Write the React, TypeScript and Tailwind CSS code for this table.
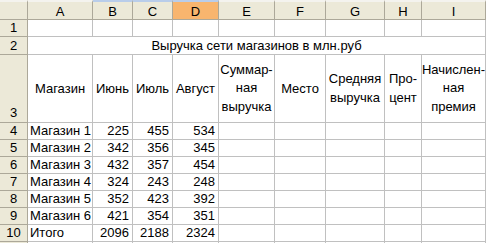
import type { ReactNode } from "react";

const columns = ["A", "B", "C", "D", "E", "F", "G", "H", "I"];

const stores: [string, number, number, number][] = [
  ["Магазин 1", 225, 455, 534],
  ["Магазин 2", 342, 356, 345],
  ["Магазин 3", 432, 357, 454],
  ["Магазин 4", 324, 243, 248],
  ["Магазин 5", 352, 423, 392],
  ["Магазин 6", 421, 354, 351],
  ["Итого", 2096, 2188, 2324],
];

function Head({ children, active, className = "" }: { children?: ReactNode; active?: boolean; className?: string }) {
  return (
    <div
      className={`flex justify-center border-r border-b border-[#aca899] ${
        active ? "bg-[#f8b56e]" : "bg-[#ece9d8]"
      } ${className}`}
    >
      {children}
    </div>
  );
}

function Cell({ children, className = "" }: { children?: ReactNode; className?: string }) {
  return <div className={`flex border-r border-b border-[#c0c0c0] ${className}`}>{children}</div>;
}

export default function App() {
  return (
    <div className="h-[243px] w-[486px] overflow-hidden bg-white text-[13px] text-black [font-family:'Liberation_Sans',Arial,sans-serif]">
      <div className="grid grid-cols-[28px_65px_40px_40px_46px_56px_51px_59px_37px_64px] grid-rows-[20px_17px_18px_68px_17px_17px_17px_17px_17px_17px_17px_20px] leading-[16px]">
        {/* column headers */}
        <Head className="border-t-2 border-t-[#f4f3ee]" />
        {columns.map((c) => (
          <Head
            key={c}
            active={c === "D"}
            className={`items-center pt-0.5 border-t-2 ${
              c === "B" || c === "C" || c === "D" ? "border-t-[#b9cdea]" : "border-t-[#f4f3ee]"
            }`}
          >
            {c}
          </Head>
        ))}

        {/* row 1 */}
        <Head className="items-center">1</Head>
        {columns.map((c) => (
          <Cell key={c} />
        ))}

        {/* row 2 */}
        <Head className="items-center">2</Head>
        <Cell className="col-span-9 items-center justify-center">Выручка сети магазинов в млн.руб</Cell>

        {/* row 3 */}
        <Head className="items-end pb-px">3</Head>
        <Cell className="items-center justify-center">Магазин</Cell>
        <Cell className="items-center justify-center">Июнь</Cell>
        <Cell className="items-center justify-center">Июль</Cell>
        <Cell className="items-center justify-center">Август</Cell>
        <Cell className="items-center justify-center text-center leading-[18.5px]">
          Суммар-
          <br />
          ная
          <br />
          выручка
        </Cell>
        <Cell className="items-center justify-center">Место</Cell>
        <Cell className="items-center justify-center text-center leading-[18.5px]">
          Средняя
          <br />
          выручка
        </Cell>
        <Cell className="items-center justify-center text-center leading-[18.5px]">
          Про-
          <br />
          цент
        </Cell>
        <Cell className="items-center justify-center text-center leading-[18.5px]">
          Начислен-
          <br />
          ная
          <br />
          премия
        </Cell>

        {/* rows 4-10 */}
        {stores.map(([name, jun, jul, aug], i) => (
          <div key={name} className="contents">
            <Head className="items-center">{i + 4}</Head>
            <Cell className="items-center pl-[2px] whitespace-nowrap">{name}</Cell>
            <Cell className="items-center justify-end pr-[3px]">{jun}</Cell>
            <Cell className="items-center justify-end pr-[3px]">{jul}</Cell>
            <Cell className="items-center justify-end pr-[3px]">{aug}</Cell>
            <Cell />
            <Cell />
            <Cell />
            <Cell />
            <Cell />
          </div>
        ))}

        {/* row 11 (cut off) */}
        <Head />
        {columns.map((c) => (
          <Cell key={c} />
        ))}
      </div>
    </div>
  );
}
